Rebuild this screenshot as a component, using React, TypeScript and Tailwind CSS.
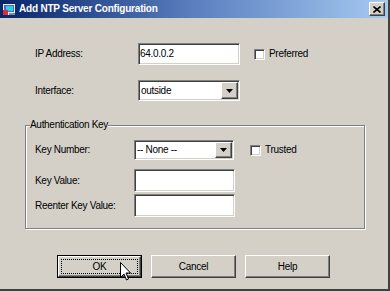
const sunken =
  'border border-t-[#808080] border-l-[#808080] border-b-white border-r-white shadow-[inset_1px_1px_0_#404040,inset_-1px_-1px_0_#d4d0c8]'
const raised =
  'border border-t-white border-l-white border-b-[#404040] border-r-[#404040] shadow-[inset_-1px_-1px_0_#808080,inset_1px_1px_0_#d4d0c8]'

function TextBox({ value = '', className = '' }: { value?: string; className?: string }) {
  return (
    <div className={`${sunken} bg-white flex items-center pl-[1px] ${className}`}>
      <span>{value}</span>
    </div>
  )
}

function Combo({ value, className = '' }: { value: string; className?: string }) {
  return (
    <div className={`${sunken} bg-white flex items-stretch p-[1px] ${className}`}>
      <span className="flex-1 flex items-center pl-[1px]">{value}</span>
      <div className={`${raised} w-[17px] bg-[#d4d0c8] flex items-center justify-center`}>
        <svg width="7" height="4" viewBox="0 0 7 4">
          <path d="M0 0h7L3.5 4z" fill="#000" />
        </svg>
      </div>
    </div>
  )
}

function Check({ label, className = '' }: { label: string; className?: string }) {
  return (
    <div className={`flex items-center gap-[4px] ${className}`}>
      <div className={`${sunken} w-[11px] h-[11px] bg-white`} />
      <span>{label}</span>
    </div>
  )
}

function Button({ label, isDefault = false, children }: { label: string; isDefault?: boolean; children?: React.ReactNode }) {
  if (isDefault) {
    return (
      <div className="relative w-[85px] h-[23px] border border-black">
        <div className={`${raised} h-full flex items-center justify-center p-[2px]`}>
          <div className="w-full h-full border border-dotted border-black flex items-center justify-center">
            {label}
          </div>
        </div>
        {children}
      </div>
    )
  }
  return (
    <div className={`${raised} w-[85px] h-[23px] flex items-center justify-center`}>{label}</div>
  )
}

export default function App() {
  return (
    <div className="w-[390px] h-[291px] bg-[#d4d0c8] flex flex-col border-r-2 border-b-2 border-r-[#404040] border-b-[#404040] font-['Liberation_Sans',Arial,sans-serif] text-[10px] tracking-[-0.3px] text-black leading-[12px] overflow-hidden">
      {/* title bar */}
      <div className="h-[18px] shrink-0 bg-linear-to-r from-[#0a246a] via-[#5b7fbf] to-[#a6caf0] flex items-center pl-[3px] pr-[3px]">
        <svg width="13" height="13" viewBox="0 0 13 13">
          <rect x="0" y="1" width="12" height="11" fill="#e8eef8" />
          <rect x="1" y="2" width="10" height="7" fill="#3f6fc4" />
          <rect x="3" y="3" width="7" height="5" fill="#38c8e8" />
          <rect x="0" y="7" width="5" height="5" fill="#d83030" />
          <rect x="6" y="10" width="6" height="2" fill="#7a8aa8" />
        </svg>
        <span className="ml-[3px] text-white font-bold text-[10px] tracking-[-0.2px]">Add NTP Server Configuration</span>
        <div className={`${raised} ml-auto w-[16px] h-[14px] bg-[#d4d0c8] flex items-center justify-center`}>
          <svg width="8" height="7" viewBox="0 0 8 7">
            <path d="M0.5 0.5L7.5 6.5M7.5 0.5L0.5 6.5" stroke="#000" strokeWidth="1.6" />
          </svg>
        </div>
      </div>

      {/* IP Address */}
      <div className="flex items-center mt-[25px]">
        <span className="w-[138px] pl-[35px]">IP Address:</span>
        <TextBox value="64.0.0.2" className="w-[102px] h-[22px]" />
        <Check label="Preferred" className="ml-[14px]" />
      </div>

      {/* Interface */}
      <div className="flex items-center mt-[15px]">
        <span className="w-[138px] pl-[35px]">Interface:</span>
        <Combo value="outside" className="w-[102px] h-[21px]" />
      </div>

      {/* Authentication Key group */}
      <fieldset className="ml-[25px] w-[340px] mt-[18px] border border-[#808080] shadow-[1px_1px_0_#ffffff,inset_1px_1px_0_#ffffff] pb-[11px]">
        <legend className="ml-[4px] bg-[#d4d0c8]">Authentication Key</legend>
        <div className="flex items-center mt-[9px]">
          <span className="w-[108px] pl-[9px]">Key Number:</span>
          <Combo value="-- None --" className="w-[100px] h-[20px]" />
          <Check label="Trusted" className="ml-[16px]" />
        </div>
        <div className="flex items-center mt-[9px]">
          <span className="w-[108px] pl-[9px]">Key Value:</span>
          <TextBox className="w-[101px] h-[23px]" />
        </div>
        <div className="flex items-center mt-[2px]">
          <span className="w-[108px] pl-[9px]">Reenter Key Value:</span>
          <TextBox className="w-[101px] h-[23px]" />
        </div>
      </fieldset>

      {/* buttons */}
      <div className="flex gap-[9px] ml-[57px] mt-[26px]">
        <Button label="OK" isDefault>
          {/* mouse pointer */}
          <svg className="absolute left-[62px] top-[6px]" width="12" height="19" viewBox="0 0 12 19">
            <path d="M0.5 0.5V15.5L4 12L6.5 18L8.5 17L6 11H10.5Z" fill="#fff" stroke="#000" strokeWidth="1" strokeLinejoin="miter" />
          </svg>
        </Button>
        <Button label="Cancel" />
        <Button label="Help" />
      </div>
    </div>
  )
}
